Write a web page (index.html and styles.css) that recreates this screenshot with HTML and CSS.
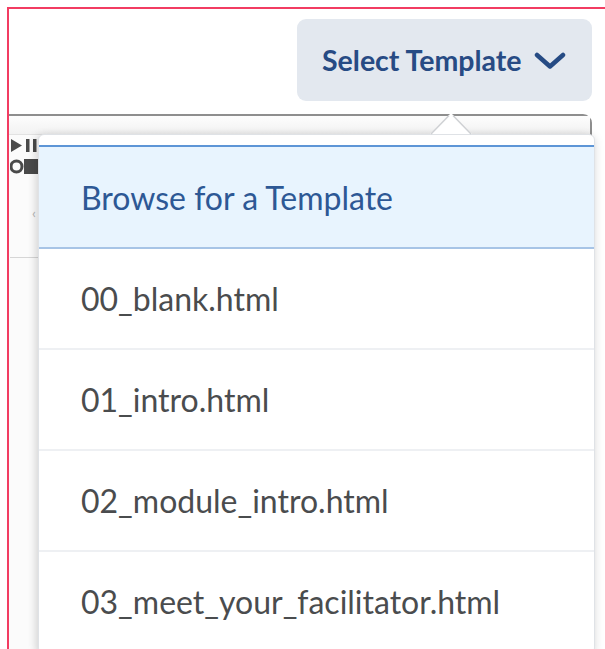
FILE: index.html
```html
<!DOCTYPE html>
<html lang="en">
<head>
<meta charset="utf-8">
<title>Select Template</title>
<link rel="stylesheet" href="styles.css">
</head>
<body>
<div class="frame">
  <div class="header">
    <button class="select-btn" type="button">
      <span>Select Template</span>
      <svg class="chevron" width="32" height="18" viewBox="0 0 32 18" aria-hidden="true">
        <path d="M3 3 L16 14.5 L29 3" fill="none" stroke="#264b84" stroke-width="4.5" stroke-linecap="round" stroke-linejoin="round"/>
      </svg>
    </button>
  </div>

  <div class="editor">
    <div class="toolbar"></div>
    <div class="side-tools">
      <div class="tool-row">
        <svg width="30" height="15" viewBox="0 0 30 15" aria-hidden="true">
          <path d="M1 1 L12 7.5 L1 14 Z" fill="#4a4a4a"/>
          <rect x="16" y="1" width="3.5" height="13" fill="#4a4a4a"/>
          <rect x="23" y="1" width="3.5" height="13" fill="#4a4a4a"/>
        </svg>
      </div>
      <div class="tool-row">
        <svg width="30" height="17" viewBox="0 0 30 17" aria-hidden="true">
          <circle cx="6.5" cy="8.5" r="5.5" fill="none" stroke="#4a4a4a" stroke-width="3"/>
          <rect x="14" y="1" width="15" height="15" fill="#4a4a4a"/>
        </svg>
      </div>
      <div class="side-mark">‹</div>
      <div class="side-rule"></div>
    </div>

    <div class="dropdown">
      <svg class="caret" width="42" height="22" viewBox="0 0 42 22" aria-hidden="true">
        <path d="M0 21 L20 1 L22 1 L42 21 Z" fill="#ffffff"/>
        <path d="M1 21 L19 2.5 M23 2.5 L41 21" fill="none" stroke="#cfd1d4" stroke-width="1.5"/>
      </svg>
      <ul class="menu">
        <li class="item active">Browse for a Template</li>
        <li class="item">00_blank.html</li>
        <li class="item">01_intro.html</li>
        <li class="item">02_module_intro.html</li>
        <li class="item">03_meet_your_facilitator.html</li>
      </ul>
    </div>
  </div>
</div>
</body>
</html>
```

FILE: styles.css
```css
html, body {
  margin: 0;
  padding: 0;
  background: #ffffff;
  overflow: hidden;
  height: 100%;
}

body {
  font-family: Lato, "Open Sans", "Liberation Sans", sans-serif;
}

.frame {
  margin: 7px 0 0 7px;
  width: 620px;
  height: 700px;
  border-top: 2px solid #f23c62;
  border-left: 2px solid #f23c62;
  box-sizing: border-box;
}

.header {
  display: flex;
  justify-content: flex-end;
  padding: 10px 35px 0 0;
}

.select-btn {
  display: flex;
  align-items: center;
  gap: 12px;
  width: 295px;
  height: 82px;
  padding: 0 0 0 25px;
  border: none;
  border-radius: 9px;
  background: #e3e8ef;
  color: #274b84;
  font-family: Lato, "Open Sans", "Liberation Sans", sans-serif;
  font-size: 28.5px;
  font-weight: 700;
  box-sizing: border-box;
  cursor: pointer;
}

.chevron {
  display: block;
  margin-top: 2px;
}

.editor {
  position: relative;
  margin-top: 13px;
  width: 581px;
  height: 560px;
  border-top: 2px solid #8e8e8e;
  border-right: 2px solid #8e8e8e;
  border-top-right-radius: 9px;
  background: #fbfbfb;
}

.toolbar {
  height: 18px;
  background: linear-gradient(#fdfdfd, #f2f2f2);
  border-bottom: 1px solid #e2e2e2;
}

.side-tools {
  display: flex;
  flex-direction: column;
  gap: 5px;
  padding: 3px 0 0 1px;
  width: 28px;
}

.tool-row svg {
  display: block;
}

.side-mark {
  margin: 26px 0 0 22px;
  color: #b5b5b5;
  font-size: 14px;
  line-height: 14px;
}

.side-rule {
  margin-top: 32px;
  height: 1px;
  background: #d6d6d6;
}

.dropdown {
  position: absolute;
  left: 29px;
  top: 18px;
  width: 555px;
  background: #ffffff;
  border: 1px solid #dfe2e6;
  border-radius: 6px;
  box-shadow: 0 2px 10px rgba(0, 0, 0, 0.14), -4px 0 8px rgba(0, 0, 0, 0.06);
  padding-top: 10px;
}

.caret {
  position: absolute;
  left: 391px;
  top: -22px;
}

.menu {
  list-style: none;
  margin: 0;
  padding: 0;
  border-top: 2px solid #5d95d6;
}

.item {
  display: flex;
  align-items: center;
  height: 99px;
  padding-left: 42px;
  border-bottom: 2px solid #eef0f3;
  color: #4a4c4e;
  font-size: 32px;
}

.item.active {
  height: 100px;
  background: #e8f4fe;
  border-bottom: 2px solid #a7c4e6;
  color: #2d5895;
}
```
